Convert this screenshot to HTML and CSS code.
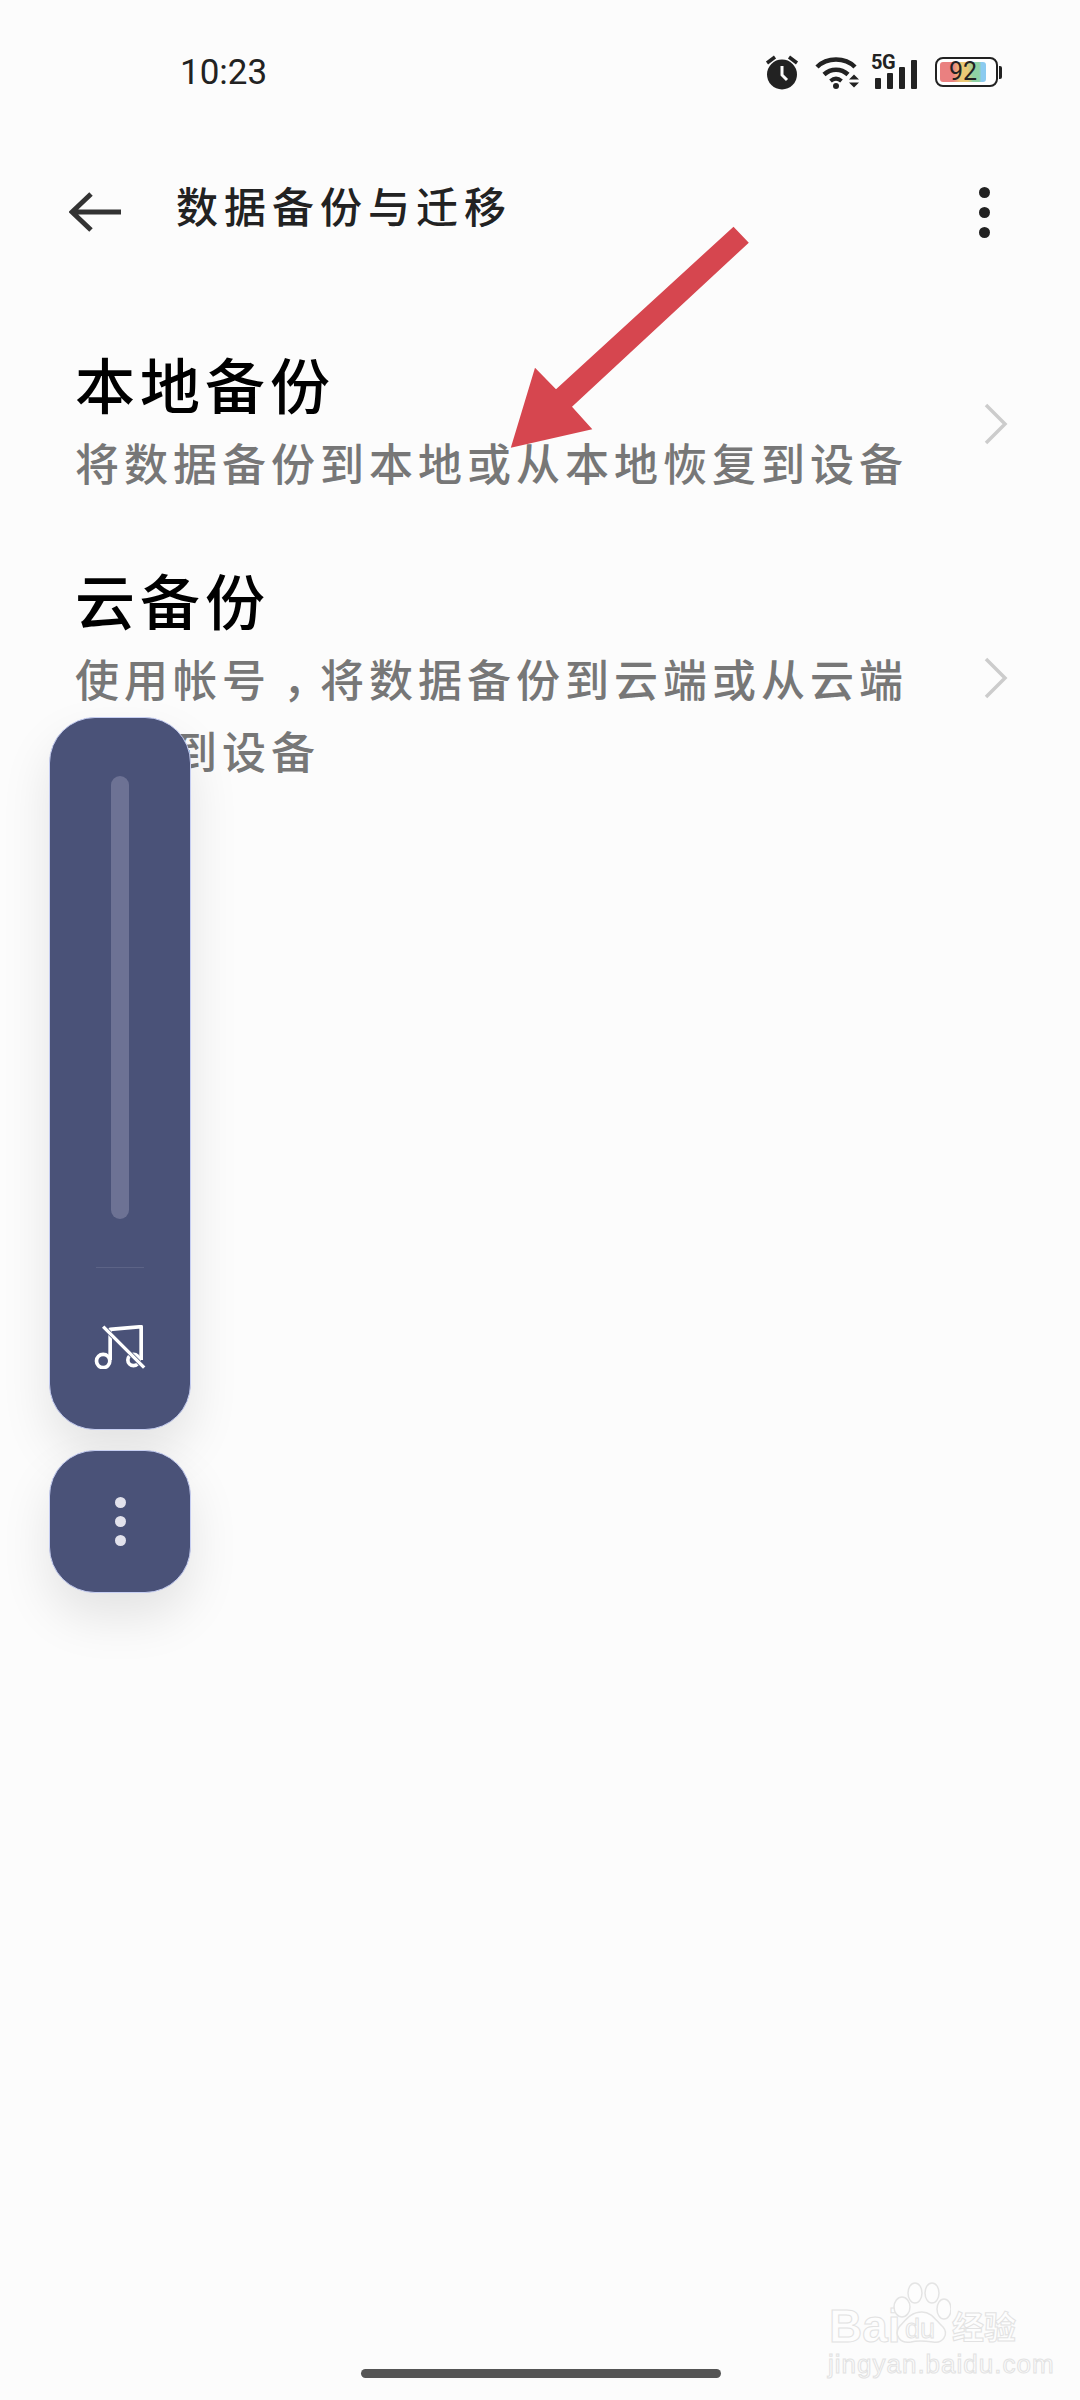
FILE: index.html
```html
<!DOCTYPE html>
<html lang="zh-CN">
<head>
  <meta charset="UTF-8">
  <meta name="viewport" content="width=device-width, initial-scale=1.0">
  <title>数据备份与迁移</title>
  <link rel="stylesheet" href="styles.css">
</head>
<body>
  <div class="pantalla">
    <div class="barra-estado">
      <span class="hora">10:23</span>
      <div class="iconos-estado">
        <svg class="icono-alarma" width="34" height="36" viewBox="0 0 34 36">
          <circle cx="17" cy="20.500" r="15" fill="#222"/>
          <path d="M17 12v9l5 5" fill="none" stroke="#fcfcfc" stroke-width="3"/>
          <path d="M2 9l8-6M32 9l-8-6" stroke="#222" stroke-width="3.500"/>
        </svg>
        <svg class="icono-wifi" width="46" height="34" viewBox="0 0 46 34">
          <path d="M2 12C12 2 30 2 40 12" fill="none" stroke="#222" stroke-width="4.500"/>
          <path d="M9 19.500C16 13 26 13 33 19.500" fill="none" stroke="#222" stroke-width="4.500"/>
          <path d="M15.500 26C19 23 23 23 26.500 26" fill="none" stroke="#222" stroke-width="4"/>
          <circle cx="21" cy="31" r="3" fill="#222"/>
          <path d="M34 24.500h10l-5-5zM34 27.500h10l-5 5z" fill="#222"/>
        </svg>
        <div class="senal">
          <span class="senal-5g">5G</span>
          <div class="senal-barras">
            <i class="barra-1"></i><i class="barra-2"></i><i class="barra-3"></i><i class="barra-4"></i>
          </div>
        </div>
        <div class="bateria">
          <div class="bateria-cuerpo"><span class="bateria-nivel">92</span></div>
          <div class="bateria-punta"></div>
        </div>
      </div>
    </div>

    <div class="cabecera">
      <svg class="flecha-atras" width="54" height="42" viewBox="0 0 54 42">
        <path d="M52 21H4M22 3L3 21l19 18" fill="none" stroke="#333" stroke-width="5"/>
      </svg>
      <h1 class="titulo">数据备份与迁移</h1>
      <div class="menu-puntos"><i></i><i></i><i></i></div>
    </div>

    <div class="lista">
      <div class="fila">
        <div class="fila-texto">
          <div class="fila-titulo">本地备份</div>
          <div class="fila-sub">将数据备份到本地或从本地恢复到设备</div>
        </div>
        <svg class="chevron" width="24" height="42" viewBox="0 0 24 42">
          <path d="M2 2l19 19L2 40" fill="none" stroke="#ccc" stroke-width="3.500"/>
        </svg>
      </div>
      <div class="fila">
        <div class="fila-texto">
          <div class="fila-titulo">云备份</div>
          <div class="fila-sub">使用帐号<span class="coma">，</span>将数据备份到云端或从云端恢复到设备</div>
        </div>
        <svg class="chevron" width="24" height="42" viewBox="0 0 24 42">
          <path d="M2 2l19 19L2 40" fill="none" stroke="#ccc" stroke-width="3.500"/>
        </svg>
      </div>
    </div>

    <!-- flecha roja dibujada encima de la captura -->
    <svg class="anotacion" width="1080" height="520" viewBox="0 0 1080 520">
      <polygon points="733.500,226.700 748.800,242.700 572,406.700 592.300,429.300 510.800,447.700 535,367.700 556,389.300" fill="#d6464f"/>
    </svg>

    <div class="flotante">
      <div class="panel panel-volumen">
        <div class="pista"></div>
        <div class="separador"></div>
        <svg class="icono-nota" width="52" height="44" viewBox="215 320 155 132">
          <circle cx="242" cy="428" r="20" fill="none" stroke="#fff" stroke-width="11"/>
          <path d="M263 425V333L356 325V425" fill="none" stroke="#fff" stroke-width="11" stroke-linejoin="round"/>
          <circle cx="333" cy="425" r="17" fill="none" stroke="#fff" stroke-width="11"/>
          <path d="M242 325L365 448" stroke="#4a5278" stroke-width="14"/>
          <path d="M242 325L365 448" stroke="#fff" stroke-width="10"/>
        </svg>
      </div>
      <div class="panel panel-mas">
        <i></i><i></i><i></i>
      </div>
    </div>

    <div class="marca-agua">
      <span class="marca-bai">Bai</span>
      <svg class="marca-pata" width="60" height="64" viewBox="0 0 60 64">
        <g fill="#fdfdfd" stroke="#e4e4e4" stroke-width="1.500">
          <ellipse cx="11" cy="25" rx="8" ry="10"/>
          <ellipse cx="24" cy="11" rx="7" ry="10"/>
          <ellipse cx="41" cy="11" rx="7" ry="10"/>
          <ellipse cx="53" cy="27" rx="7" ry="10"/>
          <path d="M31 30c10 0 14 9 21 15 6 7 0 17-10 15-7-1-15-2-22 0C9 62 3 53 8 45c6-6 11-15 23-15z"/>
        </g>
      </svg>
      <span class="marca-du">du</span>
      <span class="marca-jing">经验</span>
      <span class="marca-url">jingyan.baidu.com</span>
    </div>

    <div class="barra-inicio"></div>
  </div>
</body>
</html>
```

FILE: styles.css
```css
body {
  margin: 0;
  padding: 0;
  background: #fcfcfc;
  font-family: 'Noto Sans CJK SC', 'Noto Sans', sans-serif;
}

.pantalla {
  position: relative;
  width: 1080px;
  height: 2400px;
  overflow: hidden;
  background: #fcfcfc;
}

.barra-estado {
  display: flex;
  align-items: center;
  justify-content: space-between;
  height: 44px;
  padding: 50px 78px 0 180px;
}

.hora {
  font-family: 'Roboto', sans-serif;
  font-size: 35px;
  color: #222;
}

.iconos-estado {
  display: flex;
  align-items: center;
}

.icono-alarma {
  margin-right: 16px;
}

.icono-wifi {
  margin-right: 10px;
}

.senal {
  position: relative;
  width: 48px;
  height: 34px;
  margin-right: 16px;
}

.senal-5g {
  position: absolute;
  left: 0;
  top: -3px;
  font-family: 'Roboto', sans-serif;
  font-size: 20px;
  line-height: 20px;
  font-weight: 700;
  letter-spacing: -0.5px;
  color: #222;
}

.senal-barras {
  position: absolute;
  left: 4px;
  bottom: 0;
  display: flex;
  align-items: flex-end;
  gap: 6px;
}

.senal-barras i {
  display: block;
  width: 6px;
  background: #222;
  border-radius: 1px;
}

.barra-1 { height: 11px; }
.barra-2 { height: 16px; }
.barra-3 { height: 22px; }
.barra-4 { height: 29px; }

.bateria {
  display: flex;
  align-items: center;
  gap: 1px;
}

.bateria-cuerpo {
  box-sizing: border-box;
  display: flex;
  width: 63px;
  height: 30px;
  padding: 3px 10px 3px 3px;
  border: 2.500px solid #222;
  border-radius: 8px;
  background: #fff;
}

.bateria-nivel {
  flex: 1;
  border-radius: 3px;
  background: linear-gradient(90deg, #ea8080 0%, #ea8080 28%, #ecc975 45%, #ecc975 60%, #8fd2a4 72%, #8fd2a4 85%, #8ccbf0 90%);
  font-family: 'Roboto', sans-serif;
  font-size: 25px;
  line-height: 20px;
  text-align: center;
  color: #222;
}

.bateria-punta {
  width: 3px;
  height: 13px;
  background: #222;
  border-radius: 0 2px 2px 0;
}

.cabecera {
  display: flex;
  align-items: center;
  height: 100px;
  margin-top: 68px;
  padding: 0 90px 0 69px;
}

.flecha-atras {
  flex-shrink: 0;
  margin-right: 53px;
}

.titulo {
  flex: 1;
  margin: 0 0 16px;
  font-size: 42px;
  font-weight: 500;
  letter-spacing: 6px;
  color: #222;
}

.menu-puntos {
  display: flex;
  flex-direction: column;
  gap: 9px;
}

.menu-puntos i {
  display: block;
  width: 11px;
  height: 11px;
  border-radius: 50%;
  background: #222;
}

.lista {
  padding-top: 51px;
}

.fila {
  display: flex;
  align-items: center;
  justify-content: space-between;
  padding: 31px 72px 31px 75px;
}

.fila-texto {
  width: 860px;
}

.fila-titulo {
  font-size: 60px;
  line-height: 78px;
  font-weight: 500;
  letter-spacing: 5px;
  color: #000;
}

.fila-sub {
  margin-top: 4px;
  font-size: 44px;
  line-height: 72px;
  font-weight: 500;
  letter-spacing: 5px;
  color: #777;
}

/* la coma va centrada en su celda, como en el tema del sistema */
.coma {
  display: inline-block;
  width: 49px;
  text-indent: 12px;
  letter-spacing: 0;
}

.chevron {
  margin-top: 5px;
}

.fila:last-child .chevron {
  margin-top: 10px;
}

.anotacion {
  position: absolute;
  left: 0;
  top: 0;
}

.flotante {
  position: absolute;
  left: 49px;
  top: 717px;
  display: flex;
  flex-direction: column;
  gap: 20px;
}

.panel {
  box-sizing: border-box;
  display: flex;
  flex-direction: column;
  align-items: center;
  width: 142px;
  border: 1.500px solid #c6cef2;
  border-radius: 46px;
  background: #4a5278;
  box-shadow: 0 24px 50px rgba(0, 0, 0, 0.1);
}

.panel-volumen {
  height: 713px;
  padding-top: 58px;
}

.pista {
  width: 18px;
  height: 443px;
  border-radius: 9px;
  background: #6d7294;
}

.separador {
  width: 48px;
  height: 1px;
  margin-top: 48px;
  background: #5c6386;
}

.icono-nota {
  margin-top: 57px;
}

.panel-mas {
  justify-content: center;
  gap: 8px;
  height: 143px;
}

.panel-mas i {
  display: block;
  width: 11px;
  height: 11px;
  border-radius: 50%;
  background: #e2e2ec;
}

.marca-agua {
  position: absolute;
  left: 826px;
  top: 2280px;
  width: 200px;
  height: 100px;
  color: #fdfdfd;
  -webkit-text-stroke: 1px #e2e2e2;
}

.marca-agua span {
  position: absolute;
  white-space: nowrap;
}

.marca-bai {
  left: 3px;
  top: 20px;
  font-family: 'Liberation Sans', sans-serif;
  font-size: 46px;
  line-height: 52px;
  font-weight: 700;
}

.marca-pata {
  position: absolute;
  left: 65px;
  top: 2px;
}

.marca-du {
  left: 79px;
  top: 34px;
  font-family: 'Liberation Sans', sans-serif;
  font-size: 27px;
  line-height: 30px;
}

.marca-jing {
  left: 126px;
  top: 22px;
  font-size: 32px;
  line-height: 46px;
  font-weight: 700;
}

.marca-url {
  left: 2px;
  top: 69px;
  font-family: 'Liberation Sans', sans-serif;
  font-size: 26px;
  line-height: 30px;
  letter-spacing: 1px;
}

.barra-inicio {
  position: absolute;
  left: 361px;
  top: 2369px;
  width: 360px;
  height: 9px;
  border-radius: 5px;
  background: #555;
}
```
